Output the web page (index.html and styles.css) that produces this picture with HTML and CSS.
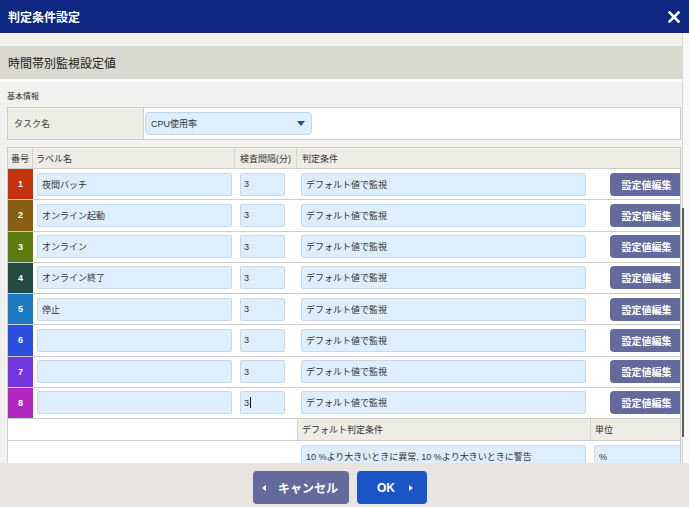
FILE: index.html
```html
<!DOCTYPE html>
<html lang="ja">
<head>
<meta charset="utf-8">
<title>判定条件設定</title>
<link rel="stylesheet" href="styles.css">
</head>
<body>
<div class="dialog">
  <header class="titlebar">
    <span class="title">判定条件設定</span>
    <svg class="close" viewBox="0 0 12 12" width="12" height="12"><path d="M1.5 1.5 L10.5 10.5 M10.5 1.5 L1.5 10.5" stroke="#fff" stroke-width="2.6" stroke-linecap="square"/></svg>
  </header>
  <div class="content">
    <div class="scroll">
      <div class="topstrip"></div>
      <h2 class="section-title">時間帯別監視設定値</h2>
      <div class="section-body">
        <div class="caption">基本情報</div>
        <div class="task-table">
          <div class="task-label">タスク名</div>
          <div class="task-value">
            <div class="select">CPU使用率<span class="tri"></span></div>
          </div>
        </div>
        <div class="grid">
          <div class="row head">
            <div class="h-num">番号</div>
            <div class="h-label">ラベル名</div>
            <div class="h-int">検査間隔(分)</div>
            <div class="h-cond">判定条件</div>
          </div>
          <div class="row data">
            <div class="num c1">1</div>
            <div class="field f-label">夜間バッチ</div>
            <div class="field f-int">3</div>
            <div class="field f-cond">デフォルト値で監視</div>
            <div class="btn-edit">設定値編集</div>
          </div>
          <div class="row data">
            <div class="num c2">2</div>
            <div class="field f-label">オンライン起動</div>
            <div class="field f-int">3</div>
            <div class="field f-cond">デフォルト値で監視</div>
            <div class="btn-edit">設定値編集</div>
          </div>
          <div class="row data">
            <div class="num c3">3</div>
            <div class="field f-label">オンライン</div>
            <div class="field f-int">3</div>
            <div class="field f-cond">デフォルト値で監視</div>
            <div class="btn-edit">設定値編集</div>
          </div>
          <div class="row data">
            <div class="num c4">4</div>
            <div class="field f-label">オンライン終了</div>
            <div class="field f-int">3</div>
            <div class="field f-cond">デフォルト値で監視</div>
            <div class="btn-edit">設定値編集</div>
          </div>
          <div class="row data">
            <div class="num c5">5</div>
            <div class="field f-label">停止</div>
            <div class="field f-int">3</div>
            <div class="field f-cond">デフォルト値で監視</div>
            <div class="btn-edit">設定値編集</div>
          </div>
          <div class="row data">
            <div class="num c6">6</div>
            <div class="field f-label"></div>
            <div class="field f-int">3</div>
            <div class="field f-cond">デフォルト値で監視</div>
            <div class="btn-edit">設定値編集</div>
          </div>
          <div class="row data">
            <div class="num c7">7</div>
            <div class="field f-label"></div>
            <div class="field f-int">3</div>
            <div class="field f-cond">デフォルト値で監視</div>
            <div class="btn-edit">設定値編集</div>
          </div>
          <div class="row data">
            <div class="num c8">8</div>
            <div class="field f-label"></div>
            <div class="field f-int">3<span class="caret"></span></div>
            <div class="field f-cond">デフォルト値で監視</div>
            <div class="btn-edit">設定値編集</div>
          </div>
          <div class="row dhead">
            <div class="blank"></div>
            <div class="d-cond">デフォルト判定条件</div>
            <div class="d-unit">単位</div>
          </div>
          <div class="row dval">
            <div class="blank"></div>
            <div class="field f-cond">10 %より大きいときに異常, 10 %より大きいときに警告</div>
            <div class="field f-unit">%</div>
          </div>
        </div>
      </div>
    </div>
    <div class="scrollbar"><div class="thumb"></div></div>
  </div>
  <footer class="footer">
    <div class="btn cancel"><span class="tri-left"></span><span class="btn-text">キャンセル</span></div>
    <div class="btn ok"><span>OK</span><span class="tri-right"></span></div>
  </footer>
</div>
</body>
</html>
```
FILE: styles.css
```css
body {
  margin: 0;
  font-family: "Liberation Sans", "Noto Sans CJK JP", sans-serif;
  color: #333;
}

.dialog {
  width: 689px;
  height: 507px;
  display: flex;
  flex-direction: column;
  overflow: hidden;
  background: #f1f1ef;
}

.titlebar {
  height: 33px;
  flex: none;
  background: #0d2783;
  display: flex;
  align-items: center;
  justify-content: space-between;
  padding: 0 9px 0 8px;
  box-sizing: border-box;
}

.title {
  color: #fff;
  font-weight: bold;
  font-size: 12px;
}

.close {
  display: block;
}

.content {
  flex: 1;
  display: flex;
  min-height: 0;
}

.scroll {
  width: 682px;
  flex: none;
  overflow: hidden;
}

.topstrip {
  height: 13px;
}

.section-title {
  margin: 0;
  height: 33px;
  background: #d9d9d2;
  font-size: 12px;
  font-weight: normal;
  color: #222;
  padding-left: 8px;
  display: flex;
  align-items: center;
  border-bottom: 3px solid #fff;
}

.section-body {
  padding-left: 7px;
}

.caption {
  height: 25px;
  font-size: 8px;
  color: #333;
  display: flex;
  align-items: center;
  padding-top: 2px;
  box-sizing: border-box;
}

.task-table {
  display: flex;
  height: 31px;
  width: 672px;
  border: 1px solid #cccccc;
  background: #fff;
}

.task-label {
  width: 136px;
  flex: none;
  background: #edece5;
  border-right: 1px solid #cccccc;
  font-size: 9px;
  color: #444;
  padding-left: 6px;
  box-sizing: border-box;
  display: flex;
  align-items: center;
}

.task-value {
  display: flex;
  align-items: center;
}

.select {
  margin-left: 1px;
  width: 167px;
  height: 23px;
  box-sizing: border-box;
  border: 1px solid #c3d6ec;
  border-radius: 4px;
  background: #ddeeff;
  font-size: 9px;
  color: #333;
  padding-left: 5px;
  display: flex;
  align-items: center;
}

.tri {
  margin-left: auto;
  margin-right: 6px;
  width: 0;
  height: 0;
  border-left: 4px solid transparent;
  border-right: 4px solid transparent;
  border-top: 5px solid #1f4f9e;
}

.grid {
  margin-top: 7px;
  width: 672px;
  border: 1px solid #cccccc;
  border-bottom: none;
  background: #fff;
  overflow: hidden;
}

.row {
  display: grid;
  grid-template-columns: 25px 202px 62px 293px 90px;
}

.head {
  height: 21px;
  background: #edece5;
  border-bottom: 1px solid #cccccc;
  box-sizing: border-box;
  font-size: 9px;
  color: #333;
}

.head > div {
  display: flex;
  align-items: center;
  border-right: 1px solid #d6d6d0;
  box-sizing: border-box;
}

.h-num { padding-left: 3px; }
.h-label { padding-left: 3px; }
.h-int { padding-left: 5px; }
.h-cond { padding-left: 5px; grid-column: 4 / 6; border-right: none !important; }

.data {
  height: 31.25px;
  border-bottom: 1px solid #cccccc;
  box-sizing: border-box;
  align-items: center;
}

.num {
  align-self: stretch;
  color: #fff;
  font-weight: bold;
  font-size: 9px;
  display: flex;
  align-items: center;
  justify-content: center;
}

.c1 { background: #c4330e; }
.c2 { background: #8b5e16; }
.c3 { background: #5e7b0e; }
.c4 { background: #214c3f; }
.c5 { background: #1b7ac2; }
.c6 { background: #2d4fe0; }
.c7 { background: #7437df; }
.c8 { background: #b328c2; }

.field {
  height: 23px;
  box-sizing: border-box;
  background: #ddeeff;
  border: 1px solid #c8d9ec;
  border-radius: 2px;
  font-size: 9px;
  color: #333;
  display: flex;
  align-items: center;
  padding-left: 4px;
  white-space: nowrap;
}

.f-label { margin-left: 4px; width: 195px; }
.f-int { margin-left: 5px; width: 45px; padding-left: 3px; }
.f-cond { margin-left: 4px; width: 285px; }
.f-unit { margin-left: 4px; width: 90px; }

.caret {
  width: 1px;
  height: 11px;
  background: #111;
  margin-left: 1px;
}

.btn-edit {
  margin-left: 20px;
  width: 73px;
  height: 23px;
  background: #646a9b;
  border-radius: 4px;
  color: #fff;
  font-weight: bold;
  font-size: 10px;
  display: flex;
  align-items: center;
  justify-content: center;
}

.dhead {
  height: 22px;
  border-bottom: 1px solid #cccccc;
  box-sizing: border-box;
  font-size: 9px;
  color: #333;
}

.blank {
  grid-column: 1 / 4;
}

.d-cond,
.d-unit {
  background: #edece5;
  border-left: 1px solid #d6d6d0;
  display: flex;
  align-items: center;
  padding-left: 4px;
}

.dval {
  height: 31px;
  align-items: start;
  padding-top: 4px;
  box-sizing: border-box;
}

.scrollbar {
  flex: 1;
  background: #f8f8f7;
  border-left: 1px solid #d6d6d6;
}

.thumb {
  margin-left: -1px;
  margin-top: 175px;
  width: 2px;
  height: 229px;
  background: #5a5a5a;
}

.footer {
  height: 44px;
  flex: none;
  background: #e8e5e0;
  display: flex;
  justify-content: center;
  gap: 8px;
  padding: 8px 9px 0 0;
  box-sizing: border-box;
}

.btn {
  height: 33px;
  border-radius: 4px;
  color: #fff;
  font-weight: bold;
  font-size: 12px;
  display: flex;
  align-items: center;
  box-sizing: border-box;
}

.cancel {
  width: 96px;
  background: #646a9b;
  padding-left: 9px;
}

.ok {
  width: 70px;
  background: #1a55c8;
  padding-left: 20px;
}

.tri-left {
  width: 0;
  height: 0;
  border-top: 3px solid transparent;
  border-bottom: 3px solid transparent;
  border-right: 4px solid #fff;
}

.btn-text {
  margin-left: 12px;
}

.tri-right {
  margin-left: 14px;
  width: 0;
  height: 0;
  border-top: 3px solid transparent;
  border-bottom: 3px solid transparent;
  border-left: 4px solid #fff;
}
```
